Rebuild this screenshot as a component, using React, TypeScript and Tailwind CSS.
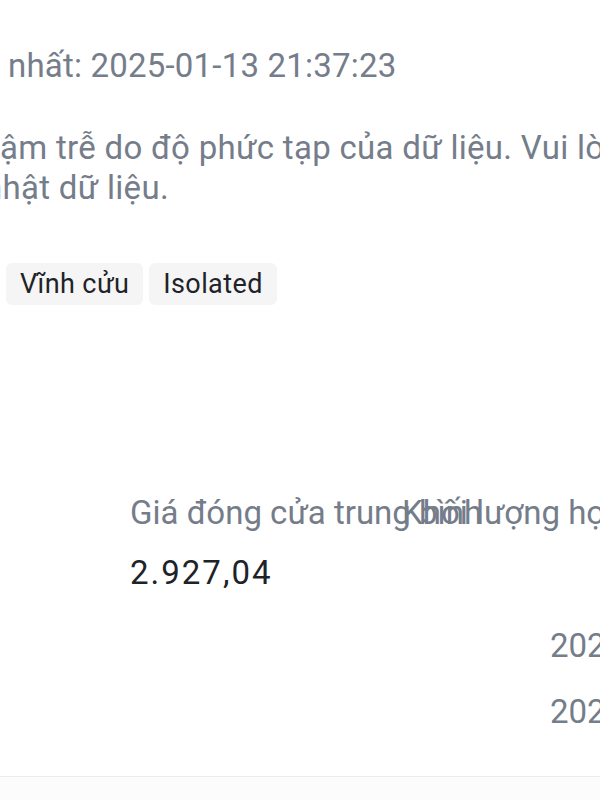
export default function App() {
  return (
    <div
      className="relative h-[800px] w-[600px] overflow-hidden bg-white"
      style={{ fontFamily: 'Roboto, "Noto Sans", sans-serif' }}
    >
      <div className="pt-[46px] text-[33px] leading-[40px] text-[#757D8A]">
        <p className="ml-[8px] whitespace-nowrap tracking-[0.2px]">nhất: 2025-01-13 21:37:23</p>
        <div className="mt-[42px]">
          <p className="-ml-[36px] whitespace-nowrap tracking-[0.3px]">chậm trễ do độ phức tạp của dữ liệu. Vui lòng</p>
          <p className="-ml-[16px] whitespace-nowrap tracking-[0.3px]">nhật dữ liệu.</p>
        </div>
      </div>

      <div className="ml-[6px] mt-[55px] flex gap-[6px]">
        <span className="flex h-[42px] items-center rounded-[6px] bg-[#F5F5F5] px-[14px] text-[27px] tracking-[0.4px] text-[#1E2329]">
          Vĩnh cửu
        </span>
        <span className="flex h-[42px] items-center rounded-[6px] bg-[#F5F5F5] px-[14px] text-[27px] tracking-[0.4px] text-[#1E2329]">
          Isolated
        </span>
      </div>

      <div className="ml-[130px] mt-[188px] flex text-[33px] leading-[40px]">
        <div className="w-[272px] shrink-0">
          <p className="whitespace-nowrap text-[#757D8A]">Giá đóng cửa trung bình</p>
          <p className="mt-[20px] tracking-[2px] text-[#1E2329]">2.927,04</p>
        </div>
        <div className="shrink-0">
          <p className="whitespace-nowrap text-[#757D8A]">Khối lượng hợp đồng</p>
        </div>
      </div>

      <div className="ml-[550px] mt-[33px] text-[33px] leading-[40px] text-[#757D8A]">
        <p className="whitespace-nowrap">2025-01-13</p>
        <p className="mt-[26px] whitespace-nowrap">2025-01-12</p>
      </div>

      <div className="mt-[44px] h-[40px] border-t border-[#EAECEF] bg-[#FCFCFC]" />
    </div>
  );
}
